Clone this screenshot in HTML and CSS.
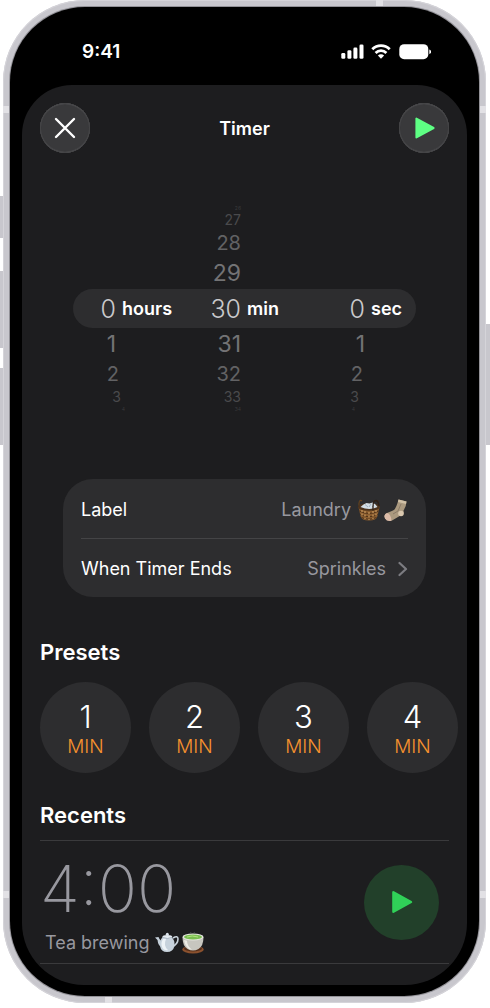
FILE: index.html
```html
<!DOCTYPE html>
<html lang="en">
<head>
<meta charset="utf-8">
<meta name="viewport" content="width=device-width, initial-scale=1">
<title>Timer</title>
<link rel="stylesheet" href="styles.css">
</head>
<body>
<div class="device">
  <i class="key key-action"></i><i class="key key-up"></i><i class="key key-down"></i><i class="key key-side"></i>
  <div class="frame">
    <i class="band band-left-top"></i><i class="band band-right-top"></i><i class="band band-left-bottom"></i><i class="band band-right-bottom"></i><i class="band band-top"></i><i class="band band-bottom"></i>
    <div class="screen">
      <div class="status">
        <time class="clock">9:41</time>
        <svg class="status-icons" width="90" height="18" viewBox="0 0 90 18" fill="#fff" aria-hidden="true">
          <rect x="0.3" y="10" width="4" height="5.8" rx="1.3"/><rect x="6.4" y="7.3" width="4" height="8.5" rx="1.3"/><rect x="12.4" y="4.6" width="4" height="11.2" rx="1.3"/><rect x="18.5" y="1.5" width="4" height="14.3" rx="1.3"/>
          <g fill="none" stroke="#fff" stroke-width="2.8"><path d="M31.3 6.300a12.3 12.3 0 0 1 17.4 0"/><path d="M34.6 9.900a7.6 7.6 0 0 1 10.8 0"/></g>
          <path d="M36.900 12.500a4.400 4.400 0 0 1 6.200 0L40 15.800z"/>
          <rect x="58.3" y="1.2" width="29" height="15" rx="4.8"/><path d="M88.3 6.500c1.300.4 2 1.200 2 2.200s-.7 1.800-2 2.200z"/>
        </svg>
      </div>
      <main class="sheet">
        <header class="bar">
          <button class="round" aria-label="Close"><svg width="24" height="24" viewBox="0 0 24 24" fill="none" stroke="#fff" stroke-width="2.400" stroke-linecap="round"><path d="M3 3l18 18M21 3L3 21"/></svg></button>
          <h1>Timer</h1>
          <button class="round" aria-label="Start timer"><svg width="24" height="24" viewBox="0 0 24 24" fill="#5eff84" stroke="#5eff84" stroke-width="2" stroke-linejoin="round"><path d="M4.400 2.600v18.800L21.600 12z"/></svg></button>
        </header>

        <section class="picker" aria-label="Duration">
          <div class="row edge"><span></span><span></span><span>26</span><span></span><span></span></div>
          <div class="row far"><span></span><span></span><span>27</span><span></span><span></span></div>
          <div class="row mid"><span></span><span></span><span>28</span><span></span><span></span></div>
          <div class="row near"><span></span><span></span><span>29</span><span></span><span></span></div>
          <div class="row chosen"><span>0</span><b>hours</b><span>30</span><b>min</b><span>0</span><b>sec</b></div>
          <div class="row near"><span>1</span><span></span><span>31</span><span></span><span>1</span></div>
          <div class="row mid"><span>2</span><span></span><span>32</span><span></span><span>2</span></div>
          <div class="row far"><span>3</span><span></span><span>33</span><span></span><span>3</span></div>
          <div class="row edge"><span>4</span><span></span><span>34</span><span></span><span>4</span></div>
        </section>

        <section class="card">
          <div class="option">
            <label for="name">Label</label>
            <input id="name" type="text" value="Laundry">
            <span class="emoji">
              <svg width="24" height="24" viewBox="0 0 24 24" role="img" aria-label="Laundry basket">
                <path d="M2.500 9C1 4 3 1 5 3" fill="none" stroke="#60401f" stroke-width="1.200"/>
                <path d="M1.500 9L3.500 18q1 4.500 8.500 4.500t8.500-4.500l2-9z" fill="#8a5c2e"/>
                <path d="M2.500 13q9.500 5 19 0M3.200 16.500q8.800 4.500 17.600 0M4.500 19.500q7.500 3.500 15 0" fill="none" stroke="#50331a" stroke-width="1"/>
                <path d="M5 12v7M8 13v8M12 14v8M16 13v8M19 12v7" stroke="#bd8e57" stroke-width="1.400" stroke-dasharray="2 1.500"/>
                <ellipse cx="12" cy="9" rx="11" ry="3.800" fill="#4d331c"/>
                <path d="M3.500 9l3-2.500 3-1.500 3 .5 3-1 3 2 2 2.500q-8 4-17 0z" fill="#d3dde5"/><path d="M8 6.500l3 2.500M14 6l-2 3M17 7l-2 2" stroke="#93a3b3" fill="none" stroke-width=".8"/>
                <path d="M22 8q-.5-5-3-5.500-3 0-3 6v4" fill="none" stroke="#302014" stroke-width="1.300"/>
              </svg>
              <svg width="25" height="24" viewBox="0 0 25 24" role="img" aria-label="Socks">
                <path d="M15.500 1.500L23.500 3.500q-.2 5-3 9 .7 4-3 5l-8 4.800Q5 24 2.500 20.500 0 17 4 15l6-2.500q3-1 5.500-11z" fill="#aa997f"/>
                <path d="M15.500 1.500l8 2-.5 2.500-8-2z" fill="#d0c0a6"/>
                <path d="M4 15q4 1 4.500 7.800Q4 24 2 20.500 0 17 4 15z" fill="#dbbba8"/>
                <circle cx="18" cy="15.500" r="2.800" fill="#d9c7ae"/><path d="M18 6l-3 7-5 3" fill="none" stroke="#8c7c68"/>
              </svg>
            </span>
          </div>
          <button class="option">
            <span>When Timer Ends</span>
            <span class="value">Sprinkles</span>
            <svg class="chevron" width="10" height="16" viewBox="0 0 10 16" fill="none" stroke="#7c7c81" stroke-width="2.200" stroke-linecap="round" stroke-linejoin="round"><path d="M1.500 2l6.500 6-6.500 6"/></svg>
          </button>
        </section>

        <h2 class="presets-title">Presets</h2>
        <div class="presets">
          <button class="preset"><b>1</b><span>MIN</span></button>
          <button class="preset"><b>2</b><span>MIN</span></button>
          <button class="preset"><b>3</b><span>MIN</span></button>
          <button class="preset"><b>4</b><span>MIN</span></button>
        </div>

        <h2 class="recents-title">Recents</h2>
        <article class="recent">
          <div>
            <div class="duration">4:00</div>
            <div class="caption">Tea brewing
              <span class="emoji">
                <svg width="24" height="24" viewBox="0 0 24 24" role="img" aria-label="Teapot">
                  <path d="M18 7q5-3 5 1 0 5-6 8" fill="none" stroke="#c9d3dc" stroke-width="1.600"/>
                  <path d="M7 16Q3 15 2.500 9L0 6.500 3.500 6Q5 10 8 11z" fill="#c3ced8"/>
                  <path d="M8 6q-4 3-3 9 1 6 7 6t7.500-6Q20 9 16.500 6z" fill="#c7d2dc"/>
                  <path d="M8 8q-2.500 4-1 8 2 4 6 3-5-4-2-11z" fill="#eef3f7"/>
                  <ellipse cx="12.300" cy="6" rx="5" ry="2" fill="#e5ebf1"/><circle cx="12.300" cy="3.300" r="1.500" fill="#dce4eb"/><path d="M7.500 6.500q5 2 9.500 0" fill="none" stroke="#8797a6" stroke-width=".7"/>
                </svg>
                <svg width="24" height="24" viewBox="0 0 24 24" role="img" aria-label="Cup of tea">
                  <ellipse cx="12" cy="18.500" rx="10.800" ry="4" fill="#8b512e"/><ellipse cx="12" cy="17.500" rx="9" ry="3" fill="#542f1b"/>
                  <path d="M1.500 6q0 9 5 12 5.500 3 11 0 5-3 5-12z" fill="#c7c6bf"/><path d="M3 9q1 6 5 9l3 .7q-5-4-5-9z" fill="#ecebe5"/>
                  <ellipse cx="12" cy="6" rx="10.500" ry="3.400" fill="#e6e6df"/><ellipse cx="12" cy="6" rx="9" ry="2.500" fill="#79bd50"/><path d="M6 6q5-2 11 0" fill="none" stroke="#b2e57d"/>
                  <path d="M10 3q-1-1 0-2M13 3q1-1 0-2" fill="none" stroke="#5a5e5b" stroke-width=".7"/>
                </svg>
              </span>
            </div>
          </div>
          <button class="start" aria-label="Start Tea brewing"><svg width="22" height="24" viewBox="0 0 22 24" fill="#30d158" stroke="#30d158" stroke-width="2.400" stroke-linejoin="round"><path d="M2.400 2.200v19.600L20 12z"/></svg></button>
        </article>
      </main>
    </div>
  </div>
</div>
</body>
</html>
```
FILE: styles.css
```css
* { box-sizing: border-box; }
body { margin: 0; background: #fff; color: #fff; font-family: Inter, "Liberation Sans", sans-serif; }
button { border: 0; margin: 0; padding: 0; background: none; color: inherit; font: inherit; cursor: pointer; }
svg { display: block; flex: none; }
h1, h2 { margin: 0; font-weight: 600; }

.device { position: relative; padding: 0 4px 0 3px; }
.frame { position: relative; padding: 7px; border-radius: 82px; background: #c8c7cd; box-shadow: inset 0 0 0 1px #d5d4d9; }
.screen { position: relative; padding: 0 12px 11px; border-radius: 75px; background: #000; box-shadow: 0 0 0 1px #929197; }

.key { position: absolute; width: 4px; background: #c8c7cd; }
.key-action { left: 0; top: 196px; height: 42px; }
.key-up { left: 0; top: 271px; height: 77px; }
.key-down { left: 0; top: 368px; height: 77px; }
.key-side { right: 0; top: 324px; height: 121px; width: 5px; }
.band { position: absolute; width: 7px; height: 7px; background: #e2e1e5; }
.band-left-top { left: 0; top: 106px; }
.band-right-top { right: 0; top: 106px; }
.band-left-bottom { left: 0; bottom: 105px; }
.band-right-bottom { right: 0; bottom: 105px; }
.band-top { right: 103px; top: 0; }
.band-bottom { left: 102px; bottom: 0; }

.status { display: flex; justify-content: space-between; align-items: center; height: 78px; padding: 12px 36px 0 60px; }
.clock { font-size: 19px; font-weight: 600; line-height: 24px; }

.sheet { padding: 18px 18px 21px; border-radius: 50px 50px 62px 62px; background: #1d1d1f; overflow: hidden; }
.bar { display: flex; justify-content: space-between; align-items: center; }
.bar h1 { padding-top: 2px; font-size: 18px; line-height: 24px; }
.round { display: grid; place-items: center; width: 50px; height: 50px; border-radius: 50%; background: #39393b; box-shadow: inset 0 0 0 1px #444446, inset 0 1px 1px #5c5c5e, inset 0 -1px 1px #5c5c5e; }

.picker { margin: 52px 33px 0; }
.row { display: grid; align-items: center; grid-template-columns: 43fr 83fr 42fr 82fr 42fr 51fr; }
.row span { text-align: right; }
.row b { padding-left: 6px; font-size: 18px; font-weight: 600; }
.chosen { height: 39px; border-radius: 20px; background: #2d2d2f; }
.chosen span { color: #c9c9cb; font-size: 25px; font-weight: 300; }
.near { height: 32px; color: #737375; font-size: 23px; line-height: 32px; }
/* Outer rows turn away from the viewer, so the side columns lean towards the middle. */
.mid { grid-template-columns: 46fr 80fr 42fr 80fr 42fr 53fr; height: 28px; color: #626264; font-size: 20px; line-height: 28px; }
.far { grid-template-columns: 48fr 78fr 42fr 76fr 42fr 57fr; height: 18px; color: #4a4a4c; font-size: 14px; line-height: 18px; }
.edge { grid-template-columns: 52fr 74fr 42fr 72fr 42fr 61fr; height: 6px; color: #39393b; font-size: 5px; line-height: 6px; }

.card { margin: 67px 23px 0; padding: 0 18px; border-radius: 30px; background: #2d2d2f; font-size: 18px; line-height: 24px; }
.option { display: flex; align-items: center; width: 100%; height: 59px; padding-top: 2px; text-align: left; }
.option + .option { border-top: 1px solid #444446; }
.option input { flex: 1; min-width: 0; padding: 0; border: 0; outline: 0; background: none; color: #98989f; font: inherit; text-align: right; }
.value { margin-left: auto; color: #98989f; }
.chevron { margin-left: 12px; }
.emoji { display: inline-flex; gap: 2px; margin-left: 6px; }

h2 { font-size: 22px; line-height: 28px; }
.presets-title { margin-top: 41px; }
.presets { display: flex; gap: 18px; margin: 16px -18px 0 0; overflow: hidden; }
.preset { display: flex; flex: none; flex-direction: column; align-items: center; justify-content: center; width: 91px; height: 91px; padding-top: 4px; border-radius: 50%; background: #2d2d2f; }
.preset b { font-size: 31px; font-weight: 300; line-height: 34px; }
.preset span { color: #f7922e; font-size: 19px; font-weight: 300; line-height: 26px; }

.recents-title { margin-top: 28px; }
.recent { display: flex; justify-content: space-between; align-items: center; height: 124px; margin-top: 11px; padding-right: 10px; border: solid #3a3a3c; border-width: 1px 0; color: #98989f; }
.duration { font-size: 65px; font-weight: 200; line-height: 80px; }
.caption { display: flex; align-items: center; padding: 2px 0 0 5px; font-size: 18px; line-height: 24px; }
.start { display: grid; place-items: center; width: 75px; height: 75px; border-radius: 50%; background: #22402a; }
```
